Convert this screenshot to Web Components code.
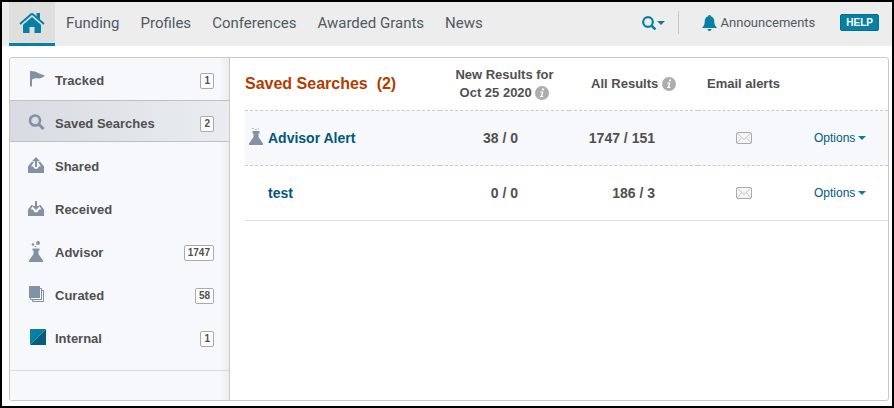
<!DOCTYPE html>
<html lang="en">
<head>
<meta charset="utf-8">
<title>Saved Searches</title>
<style>
  html {
    height: 100%;
  }
  body {
    box-sizing: border-box;
    min-height: 100%;
    margin: 0;
    display: flex;
    flex-direction: column;
    border: 2px solid #000;
    background: #fff;
    font-family: "Liberation Sans", Arial, sans-serif;
    font-size: 13px;
    line-height: 18px;
    color: #505050;
  }
  work-panel {
    flex: 1;
  }
</style>
</head>
<body>
<top-bar>
  <nav-link selected href="#home" label="Home"><ui-icon name="home"></ui-icon></nav-link>
  <nav-link href="#funding">Funding</nav-link>
  <nav-link href="#profiles">Profiles</nav-link>
  <nav-link href="#conferences">Conferences</nav-link>
  <nav-link href="#awarded">Awarded Grants</nav-link>
  <nav-link href="#news">News</nav-link>
  <top-tools slot="tools"></top-tools>
</top-bar>
<work-panel>
  <side-item slot="side" icon="flag" count="1">Tracked</side-item>
  <side-item slot="side" icon="search" count="2" selected>Saved Searches</side-item>
  <side-item slot="side" icon="shared">Shared</side-item>
  <side-item slot="side" icon="received">Received</side-item>
  <side-item slot="side" icon="flask" count="1747">Advisor</side-item>
  <side-item slot="side" icon="stack" count="58">Curated</side-item>
  <side-item slot="side" icon="internal" count="1">Internal</side-item>
  <search-table></search-table>
</work-panel>

<script>
const icons = {
  home: [26, 20, `
    <path fill="#0880a3" d="M13 4 4 11.800V19c0 .6.400 1 1 1h5.500v-6h5v6H21c.6 0 1-.4 1-1v-7.200z"/>
    <path fill="#0880a3" d="M17.500 0H21v6.500l-3.500-3z"/>
    <path fill="none" stroke="#0880a3" stroke-width="2" d="M1 11 11.900 1.600q1.100-.9 2.200 0L25 11"/>`],
  find: [14, 14, `
    <circle cx="6" cy="6" r="4.800" fill="none" stroke="#0880a3" stroke-width="2.200"/>
    <path stroke="#0880a3" stroke-width="2.600" d="m9.300 9.300 4.200 4.200"/>`],
  caret: [8, 4, `<path fill="#0f7a99" d="M0 0h8L4 4z"/>`],
  bell: [15, 16, `
    <path fill="#0880a3" d="M7.500 0c.8 0 1.300.6 1.300 1.300C11.300 2 12.300 4 12.300 6.500c0 3 .9 4.500 2.700 6.500H0c1.800-2 2.700-3.500 2.700-6.500C2.700 4 3.700 2 6.200 1.300 6.200.6 6.700 0 7.500 0z"/>
    <path fill="#0880a3" d="M5.500 14h4a2 2 0 0 1-4 0z"/>`],
  info: [14, 14, `
    <circle cx="7" cy="7" r="7" fill="#adadad"/>
    <path fill="#fff" d="M7.200 2.500h2l-.4 1.800h-2zM5.300 5.500h3.200L7.400 10h1.100l-.2 1H4.900l.2-1h.8l.9-3.500H5.100z"/>`],
  mail: [16, 12, `
    <rect x=".5" y=".5" width="15" height="11" rx="1" fill="#f5f5f5" stroke="#aaa"/>
    <path fill="none" stroke="#c4c4c4" d="m1 1 7 6.500L15 1M1 11l4.500-5M15 11l-4.500-5"/>`],
  flag: [18, 16, `
    <path fill="#8391a5" d="M2 0h2v15.500H2z"/>
    <path fill="#8391a5" d="M4 .5C6-.2 8.500 1 10 2l7 2.500c-2 2-4 3-6.500 3C8.500 6.800 6 7.500 4 8.500z"/>`],
  search: [17, 16, `
    <circle cx="7" cy="6.500" r="5" fill="none" stroke="#8391a5" stroke-width="2.600"/>
    <path stroke="#8391a5" stroke-width="3" d="m10.500 10 5 5"/>`],
  shared: [16, 16, `
    <path fill="#8391a5" d="M0 9.500 3.500 5H6L3 9.500h2.200l1.300 2.300h3l1.300-2.300H13L10 5h2.500L16 9.500V16H0z"/>
    <path fill="#8391a5" d="M8 0 4 4.200h3V10h2V4.200h3z"/>`],
  received: [16, 16, `
    <path fill="#8391a5" d="M0 9.500 3.500 5H5L2.700 9.500h2.200l1.600 2.800h3l1.600-2.800h2.200L11 5h1.500L16 9.500V16H0z"/>
    <path fill="#8391a5" d="M8 10 4 6h3V1h2v5h3z"/>`],
  flask: [16, 21, `
    <circle cx="10" cy="2" r="2" fill="#8391a5"/>
    <circle cx="5" cy="3.500" r="1.300" fill="#8391a5"/>
    <circle cx="7.500" cy="5.500" r=".8" fill="#8391a5"/>
    <path fill="#8391a5" d="M4.500 7.500h7v2h-1v3.500L15 19.500V21H1v-1.500L5.500 13V9.500h-1z"/>`],
  flasksmall: [14, 17, `
    <path fill="#b3bbc7" d="M3 0h2v1H3zM6 1h2v1H6zM9 0h1v1H9z"/>
    <path fill="#8391a5" d="M3.500 3h7v2.500h-1V9L14 15.500V17H0v-1.500L4.500 9V5.500h-1z"/>`],
  stack: [16, 16, `
    <path fill="#8391a5" d="M1 0h11v12H1z"/>
    <path fill="none" stroke="#8391a5" d="M12 2.500h1.500v11H2.500V12M14 4.500h1.500v11H4.500V14"/>`],
  internal: [18, 16, `
    <path fill="#0880a3" d="M2 0h16v16H2z"/>
    <path fill="#075c79" d="M18 0v16H2z"/>
    <path stroke="#4ba0b8" stroke-width=".7" d="M2 16 18 0"/>`],
};

customElements.define('ui-icon',
    class extends HTMLElement {
        constructor() {
            super();
            this.attachShadow({ mode: 'open' });
        }

        connectedCallback() {
            const [width, height, shape] = icons[this.getAttribute('name')];
            this.shadowRoot.innerHTML = `
<style>
  :host { display: inline-block; flex: none; }
  svg { display: block; }
</style>
<svg width="${width}" height="${height}" viewBox="0 0 ${width} ${height}" aria-hidden="true">${shape}</svg>`;
        }
    });

customElements.define('top-bar',
    class extends HTMLElement {
        constructor() {
            super();
            this.attachShadow({ mode: 'open' });
            this.shadowRoot.innerHTML = `
<style>
  :host { display: block; }
  header {
    display: flex;
    justify-content: space-between;
    height: 44px;
    padding: 0 13px 0 7px;
    background: #ededed;
    font-family: Roboto, sans-serif;
  }
  nav {
    display: flex;
    gap: 1px;
  }
</style>
<header>
  <nav><slot></slot></nav>
  <slot name="tools"></slot>
</header>`;
        }
    });

customElements.define('nav-link',
    class extends HTMLElement {
        constructor() {
            super();
            this.attachShadow({ mode: 'open' });
        }

        connectedCallback() {
            const label = this.getAttribute('label');
            this.shadowRoot.innerHTML = `
<style>
  :host { display: flex; }
  a {
    display: flex;
    align-items: center;
    padding: 0 10px;
    border-bottom: 3px solid transparent;
    color: #4f5a61;
    font-size: 15px;
    text-decoration: none;
    white-space: nowrap;
  }
  :host([selected]) a {
    background: #dfdfdd;
    border-color: #0880a3;
  }
</style>
<a href="${this.getAttribute('href')}"${label ? ` aria-label="${label}"` : ''}><slot></slot></a>`;
        }
    });

customElements.define('top-tools',
    class extends HTMLElement {
        constructor() {
            super();
            this.attachShadow({ mode: 'open' });
            this.shadowRoot.innerHTML = `
<style>
  :host {
    display: flex;
    align-items: center;
    padding-bottom: 3px;
  }
  button {
    border: 0;
    padding: 0;
    background: none;
    font: inherit;
    cursor: pointer;
  }
  .find {
    display: flex;
    align-items: center;
    gap: 1px;
  }
  .rule {
    width: 1px;
    height: 23px;
    margin: 0 23px 0 13px;
    background: #c8c8c8;
  }
  a {
    display: flex;
    align-items: center;
    gap: 4px;
    margin-right: 25px;
    color: #4f5a61;
    font-size: 13px;
    text-decoration: none;
  }
  .help {
    padding: 0 5px;
    border: 1px solid #04708f;
    border-radius: 2px;
    background: #0880a3;
    color: #fff;
    font: bold 10px/15px "Liberation Sans", Arial, sans-serif;
  }
</style>
<button class="find" aria-label="Search"><ui-icon name="find"></ui-icon><ui-icon name="caret"></ui-icon></button>
<span class="rule"></span>
<a href="#announcements"><ui-icon name="bell"></ui-icon>Announcements</a>
<button class="help">HELP</button>`;
        }
    });

customElements.define('work-panel',
    class extends HTMLElement {
        constructor() {
            super();
            this.attachShadow({ mode: 'open' });
            this.shadowRoot.innerHTML = `
<style>
  :host {
    display: flex;
    margin: 11px 3px 5px 7px;
    border: 1px solid #c9c9c9;
    border-radius: 3px;
    overflow: hidden;
  }
  aside {
    flex: none;
    width: 219px;
    border-right: 1px solid #c9c9c9;
    background: linear-gradient(to left, #ededee, #f6f8fc 10px);
  }
  nav {
    margin-top: -1px;
    padding-bottom: 12px;
    border-bottom: 1px solid #d8dadd;
  }
  main {
    flex: 1;
    min-width: 0;
    padding-left: 15px;
  }
</style>
<aside><nav><slot name="side"></slot></nav></aside>
<main><slot></slot></main>`;
        }
    });

customElements.define('side-item',
    class extends HTMLElement {
        constructor() {
            super();
            this.attachShadow({ mode: 'open' });
        }

        connectedCallback() {
            const count = this.getAttribute('count');
            this.shadowRoot.innerHTML = `
<style>
  :host {
    display: block;
    padding-bottom: 1px;
  }
  a {
    box-sizing: border-box;
    display: flex;
    align-items: center;
    height: 42px;
    padding: 5px 15px 0 18px;
    border: solid transparent;
    border-width: 1px 0;
    color: #505050;
    font-weight: bold;
    text-decoration: none;
  }
  :host([selected]) a {
    border-color: #bcc1c8;
    background: linear-gradient(to right, #d8dce2, #e9ecf0);
  }
  ui-icon {
    width: 18px;
    margin: 0 9px 3px 0;
  }
  .label { flex: 1; }
  .count {
    padding: 0 3px;
    border: 1px solid #aaa;
    border-radius: 2px;
    background: #fff;
    font-size: 10px;
    line-height: 14px;
  }
</style>
<a href="#${this.getAttribute('icon')}">
  <ui-icon name="${this.getAttribute('icon')}"></ui-icon>
  <span class="label"><slot></slot></span>
  ${count ? `<span class="count">${count}</span>` : ''}
</a>`;
        }
    });

const searches = [
    { name: 'Advisor Alert', fresh: '38 / 0', all: '1747 / 151', advisor: true },
    { name: 'test', fresh: '0 / 0', all: '186 / 3' },
];

customElements.define('search-table',
    class extends HTMLElement {
        constructor() {
            super();
            this.attachShadow({ mode: 'open' });
            this.shadowRoot.innerHTML = `
<style>
  :host { display: block; }
  table {
    width: 100%;
    table-layout: fixed;
    border-collapse: separate;
    border-spacing: 0;
  }
  .numbers { width: 129px; }
  .mail { width: 91px; }
  .menu { width: 99px; }
  th, td {
    box-sizing: border-box;
    height: 55px;
    padding: 0;
    border-bottom: 1px dashed #c9c9c9;
    text-align: center;
  }
  thead th, thead td { height: 53px; }
  tbody tr:last-child > * { border-bottom: 1px solid #ddd; }
  tr.advisor { background: #f6f8fc; }
  th:first-child { text-align: left; }
  h1 {
    margin: 0;
    color: #b23c00;
    font-size: 16px;
    white-space: pre;
  }
  th ui-icon { vertical-align: -3px; }
  td.fresh, td.all {
    font-size: 14px;
    font-weight: bold;
    text-align: right;
  }
  td.fresh { padding-right: 51px; }
  td.all { padding-right: 43px; }
  .name {
    display: flex;
    align-items: center;
    gap: 5px;
    padding-left: 4px;
  }
  .mark { width: 14px; }
  .mark ui-icon {
    display: block;
    margin-bottom: 4px;
  }
  .name a {
    color: #00587c;
    font-size: 14px;
    text-decoration: none;
  }
  button {
    display: flex;
    align-items: center;
    margin: 0 auto;
    border: 0;
    padding: 0;
    background: none;
    font: inherit;
    color: #00587c;
    cursor: pointer;
  }
  .options {
    gap: 3px;
    margin-left: 25px;
    font-size: 12px;
  }
</style>
<table>
  <colgroup><col><col class="numbers"><col class="numbers"><col class="mail"><col class="menu"></colgroup>
  <thead>
    <tr>
      <th scope="col"><h1>Saved Searches  (2)</h1></th>
      <th scope="col">New Results for<br>Oct 25 2020 <ui-icon name="info"></ui-icon></th>
      <th scope="col">All Results <ui-icon name="info"></ui-icon></th>
      <th scope="col">Email alerts</th>
      <td></td>
    </tr>
  </thead>
  <tbody></tbody>
</table>`;
            this.shadowRoot.querySelector('tbody').innerHTML = searches.map(s => `
    <tr class="${s.advisor ? 'advisor' : ''}">
      <th scope="row"><div class="name"><span class="mark">${s.advisor ? '<ui-icon name="flasksmall"></ui-icon>' : ''}</span><a href="#search">${s.name}</a></div></th>
      <td class="fresh">${s.fresh}</td>
      <td class="all">${s.all}</td>
      <td><button aria-label="Email alert"><ui-icon name="mail"></ui-icon></button></td>
      <td><button class="options">Options<ui-icon name="caret"></ui-icon></button></td>
    </tr>`).join('');
        }
    });
</script>
</body>
</html>
